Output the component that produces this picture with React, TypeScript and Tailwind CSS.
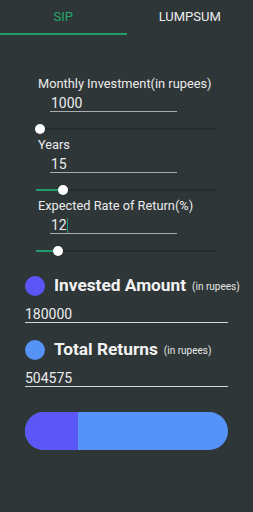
import React from 'react';

const font = { fontFamily: 'Roboto, "Noto Sans", sans-serif' };

function Tab({ label, active }: { label: string; active: boolean }) {
  return (
    <div
      className={[
        'flex-1 flex items-center justify-center h-[35px] text-[13px] font-normal',
        active
          ? 'text-[#22a86b] border-b-2 border-[#1f9c6a]'
          : 'text-[#eceeee] border-b-2 border-transparent',
      ].join(' ')}
    >
      {label}
    </div>
  );
}

function Field({
  label,
  value,
  cursor,
  fill,
}: {
  label: string;
  value: string;
  cursor?: boolean;
  fill: number;
}) {
  return (
    <div className="flex flex-col">
      <div className="ml-[38px] h-4 leading-4 text-[12.8px] text-[#ececec] whitespace-nowrap">{label}</div>
      <div className="ml-[50px] mt-[3px] w-[127px] h-[17px] border-b border-[#a9adae] flex items-center pl-[1px] text-[14px] leading-4 text-[#ececec]">
        {value}
        {cursor && <span className="inline-block w-px h-[15px] bg-[#1f9c8a] ml-[0.5px]" />}
      </div>
      <div className="ml-[36px] mt-[9px] w-[180px] h-4 relative flex items-center">
        <div className="w-full h-[2px] bg-[#262b2d]" />
        <div className="absolute left-0 h-[2px] bg-[#1f9c6a]" style={{ width: fill }} />
        <div
          className="absolute w-[10px] h-[10px] rounded-full bg-white -ml-[5px]"
          style={{ left: Math.max(fill, 4) }}
        />
      </div>
    </div>
  );
}

function Result({ color, title, value }: { color: string; title: string; value: string }) {
  return (
    <div className="flex flex-col px-[25px] mt-[17px]">
      <div className="flex items-center h-5 whitespace-nowrap">
        <span className="w-5 h-5 shrink-0 rounded-full" style={{ backgroundColor: color }} />
        <span className="ml-[9px] text-[17.3px] font-bold text-[#f2f2f2]">{title}</span>
        <span className="ml-[6px] text-[10px] text-[#e6e6e6]">(in rupees)</span>
      </div>
      <div className="mt-[9px] h-[18px] border-b border-[#d6d8d8] text-[14px] leading-4 text-[#ececec] pt-px">
        {value}
      </div>
    </div>
  );
}

export default function App() {
  const invested = 180000;
  const total = 504575;
  const pct = (invested / (invested + total)) * 100;
  return (
    <div className="w-[253px] h-[512px] bg-[#2f3638] overflow-hidden" style={font}>
      <div className="flex">
        <Tab label="SIP" active />
        <Tab label="LUMPSUM" active={false} />
      </div>
      <div className="mt-[41px] flex flex-col">
        <Field label="Monthly Investment(in rupees)" value="1000" fill={4} />
        <Field label="Years" value="15" fill={27} />
        <Field label="Expected Rate of Return(%)" value="12" cursor fill={22} />
      </div>
      <Result color="#5c55f6" title="Invested Amount" value="180000" />
      <Result color="#5593f7" title="Total Returns" value="504575" />
      <div className="mx-[25px] mt-[25px] h-[38px] rounded-full overflow-hidden flex bg-[#5593f8]">
        <div className="h-full bg-[#5c56f7]" style={{ width: pct + '%' }} />
      </div>
    </div>
  );
}
